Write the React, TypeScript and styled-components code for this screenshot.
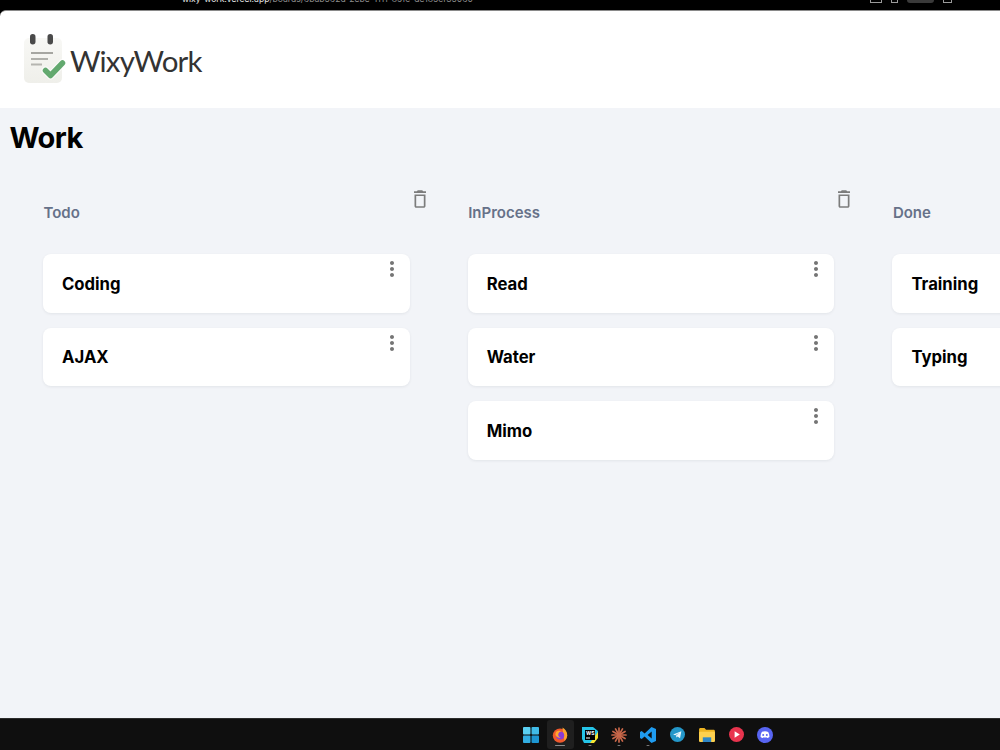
import React from 'react';
import styled, { createGlobalStyle } from 'styled-components';

const GlobalStyle = createGlobalStyle`
  html, body {
    margin: 0;
    padding: 0;
    height: 100%;
    overflow: hidden;
    background: #000;
    font-family: Inter, "Liberation Sans", sans-serif;
  }
`;

const boards = [
  { title: 'Todo', cards: ['Coding', 'AJAX'] },
  { title: 'InProcess', cards: ['Read', 'Water', 'Mimo'] },
  { title: 'Done', cards: ['Training', 'Typing'] },
];

const TrashIcon = () => (
  <svg width="24" height="24" viewBox="0 0 24 24" fill="#7c7c7c">
    <path d="M6.500 19c0 1 .8 1.800 1.800 1.800h7.400c1 0 1.800-.8 1.800-1.800V7.500h-11V19zM8.200 9h7.600v10.200H8.200V9zm7-4.800l-1-1h-4.400l-1 1H6v1.700h12V4.200z" />
  </svg>
);

const DotsIcon = () => (
  <svg width="24" height="24" viewBox="0 0 24 24" fill="#757575">
    <path d="M12 8c1.100 0 2-.9 2-2s-.9-2-2-2-2 .9-2 2 .9 2 2 2zm0 2c-1.100 0-2 .9-2 2s.9 2 2 2 2-.9 2-2-.9-2-2-2zm0 6c-1.100 0-2 .9-2 2s.9 2 2 2 2-.9 2-2-.9-2-2-2z" />
  </svg>
);

const LogoIcon = () => (
  <svg width="46" height="50" viewBox="0 0 46 50">
    <defs>
      <linearGradient id="note" x1="0" y1="0" x2="0" y2="1">
        <stop offset="0" stopColor="#f8f8f5" />
        <stop offset="1" stopColor="#efefea" />
      </linearGradient>
    </defs>
    <rect x="1" y="4" width="38" height="45" rx="5" fill="url(#note)" />
    <rect x="7" y="0" width="5.500" height="10.500" rx="2.700" fill="#4a4a4a" />
    <rect x="24.500" y="0" width="5.500" height="10.500" rx="2.700" fill="#4a4a4a" />
    <rect x="8" y="18" width="22" height="2" fill="#a6a6a1" />
    <rect x="8" y="24" width="17" height="2" fill="#b0b0ab" />
    <rect x="8" y="29.500" width="11" height="2" fill="#b5b5b0" />
    <path d="M22.500 36.500l5 5L39.500 29" fill="none" stroke="#fff" strokeWidth="8" strokeLinecap="round" strokeLinejoin="round" opacity="0.7" />
    <path d="M22.500 36.500l5 5L39.500 29" fill="none" stroke="#63a96f" strokeWidth="5.500" strokeLinecap="round" strokeLinejoin="round" />
  </svg>
);

const WindowsIcon = () => (
  <svg width="16" height="16" viewBox="0 0 18 18">
    <rect x="0" y="0" width="8.400" height="8.400" rx="1" fill="#5ad0f2" />
    <rect x="9.600" y="0" width="8.400" height="8.400" rx="1" fill="#40bbe8" />
    <rect x="0" y="9.600" width="8.400" height="8.400" rx="1" fill="#32aee2" />
    <rect x="9.600" y="9.600" width="8.400" height="8.400" rx="1" fill="#1d96d2" />
  </svg>
);

const FirefoxIcon = () => (
  <svg width="16" height="16" viewBox="0 0 16 16">
    <circle cx="8" cy="8.600" r="7.200" fill="#f0582c" />
    <path d="M10.500.6c3 1.800 5 4.600 4.700 8.200-.3 2.400-1.400 3.800-2.700 4.900L11 5.400z" fill="#fba32d" />
    <circle cx="8.200" cy="8.400" r="4" fill="#8a3bd6" />
    <path d="M3.800 5.200C5.400 3.600 8 3.400 9.800 4.300 8.200 4.600 6.800 5.400 6.400 6.800c-.6 1.800.4 3.500 2.300 3.800-2.200.8-5-1-5.300-3z" fill="#ffa72f" />
  </svg>
);

const WebStormIcon = () => (
  <svg width="16" height="16" viewBox="0 0 16 16">
    <path d="M0 0h11L16 4v6l-5 6H2L0 12z" fill="#25c4e8" />
    <path d="M8 16h4l4-5V5z" fill="#f7e531" />
    <rect x="3" y="3" width="10" height="10" fill="#000" />
    <text x="4" y="8.400" fontSize="5" fontWeight="700" fill="#fff" fontFamily="Inter, sans-serif">WS</text>
    <rect x="4" y="10.500" width="4" height="1" fill="#fff" />
  </svg>
);

const BurstIcon = () => (
  <svg width="16" height="16" viewBox="0 0 16 16" stroke="#c8674a" strokeWidth="1.700" strokeLinecap="round">
    {Array.from({ length: 12 }).map((_, i) => {
      const a = (i * Math.PI) / 6;
      return <line key={i} x1={8} y1={8} x2={8 + Math.cos(a) * 7} y2={8 + Math.sin(a) * 7} />;
    })}
  </svg>
);

const VSCodeIcon = () => (
  <svg width="16" height="16" viewBox="0 0 16 16">
    <path d="M11.500 0L16 2v12l-4.500 2L4.600 9.600 1.700 11.900 0 11V5l1.700-.9 2.900 2.300zM11.700 4.500L7.600 8l4.100 3.500z" fill="#1f9cf0" fillRule="evenodd" />
  </svg>
);

const TelegramIcon = () => (
  <svg width="15" height="15" viewBox="0 0 16 16">
    <circle cx="8" cy="8" r="8" fill="#2497c9" />
    <path d="M3.300 8l8.800-3.500-1.400 7.400-2.600-1.900-1.300 1.300-.3-2.200 3.600-3.100-4.500 2.700z" fill="#e9f5fb" />
  </svg>
);

const FolderIcon = () => (
  <svg width="16" height="14" viewBox="0 0 17 15">
    <path d="M0 1.500C0 .7.7 0 1.500 0h4.300l1.700 1.800h8c.8 0 1.500.7 1.500 1.500V14H0z" fill="#eeb422" />
    <rect x="0" y="4" width="17" height="11" rx="1" fill="#fdd04f" />
    <rect x="4" y="10" width="9" height="5" fill="#2f87c6" />
  </svg>
);

const PlayIcon = () => (
  <svg width="15" height="15" viewBox="0 0 16 16">
    <circle cx="8" cy="8" r="8" fill="#e8344e" />
    <path d="M6 4.500l5.500 3.500L6 11.500z" fill="#fff" />
  </svg>
);

const DiscordIcon = () => (
  <svg width="16" height="16" viewBox="0 0 16 16">
    <circle cx="8" cy="8" r="8" fill="#5865f2" />
    <path d="M4.800 4.900c1.900-.8 4.500-.8 6.400 0 .9 1.500 1.300 3.200 1.200 5-.8.600-1.600 1-2.400 1.200l-.5-.9c-1 .3-2 .3-3 0l-.5.900c-.8-.2-1.600-.6-2.400-1.200-.1-1.800.3-3.500 1.200-5z" fill="#fff" />
    <circle cx="6.200" cy="8" r="1" fill="#5865f2" />
    <circle cx="9.800" cy="8" r="1" fill="#5865f2" />
  </svg>
);

const apps = [
  { id: 'start', icon: <WindowsIcon /> },
  { id: 'firefox', icon: <FirefoxIcon />, active: true },
  { id: 'webstorm', icon: <WebStormIcon />, open: true },
  { id: 'burst', icon: <BurstIcon />, open: true },
  { id: 'vscode', icon: <VSCodeIcon />, open: true },
  { id: 'telegram', icon: <TelegramIcon /> },
  { id: 'folder', icon: <FolderIcon /> },
  { id: 'play', icon: <PlayIcon /> },
  { id: 'discord', icon: <DiscordIcon /> },
];

export default function App() {
  return (
    <Page>
      <GlobalStyle />
      <BrowserStrip>
        <Url>
          <b>wixy-work.vercel.app</b>/boards/6bab562d-2ebe-1111-89fc-de185cf35060
        </Url>
        <StripTools>
          <StripOutline $width={10} />
          <StripOutline $width={5} />
          <StripPill />
          <StripOutline $width={7} />
        </StripTools>
      </BrowserStrip>
      <Header>
        <Logo>
          <LogoIcon />
          <LogoText>WixyWork</LogoText>
        </Logo>
      </Header>
      <Main>
        <PageTitle>Work</PageTitle>
        <Board>
          {boards.map((column) => (
            <Column key={column.title}>
              <ColumnHead>
                <ColumnTitle>{column.title}</ColumnTitle>
                <TrashIcon />
              </ColumnHead>
              <CardList>
                {column.cards.map((card) => (
                  <Card key={card}>
                    <CardTitle>{card}</CardTitle>
                    <CardMenu>
                      <DotsIcon />
                    </CardMenu>
                  </Card>
                ))}
              </CardList>
            </Column>
          ))}
        </Board>
      </Main>
      <Taskbar>
        {apps.map((app) => (
          <TaskItem key={app.id} $active={app.active} $open={app.open}>
            {app.icon}
          </TaskItem>
        ))}
      </Taskbar>
    </Page>
  );
}

const Page = styled.div`
  width: 1000px;
  height: 750px;
  display: flex;
  flex-direction: column;
  overflow: hidden;
  background: #000;
`;

const BrowserStrip = styled.div`
  height: 10px;
  flex: none;
  display: flex;
  justify-content: space-between;
  overflow: hidden;
  padding: 0 48px 0 182px;
`;

const Url = styled.div`
  margin-top: -8px;
  font-size: 8.600px;
  line-height: 14px;
  white-space: nowrap;
  color: #8f8f8f;

  b {
    font-weight: 400;
    color: #e8e8e8;
  }
`;

const StripTools = styled.div`
  display: flex;
  align-items: flex-start;
  gap: 9px;
`;

const StripOutline = styled.div<{ $width: number }>`
  width: ${(p) => p.$width}px;
  height: 2px;
  border: 1px solid #9a9a9a;
  border-top: none;
`;

const StripPill = styled.div`
  width: 27px;
  height: 3px;
  border-radius: 0 0 5px 5px;
  background: #3a3a3a;
`;

const Header = styled.header`
  height: 97px;
  flex: none;
  display: flex;
  align-items: center;
  padding-left: 23px;
  background: #fff;
  border-top: 1px solid #8a8a8a;
  border-top-left-radius: 6px;
`;

const Logo = styled.div`
  display: flex;
  align-items: flex-end;
  margin-top: -2px;
`;

const LogoText = styled.span`
  margin-left: 1px;
  margin-bottom: 4px;
  font-family: Lato, "Open Sans", sans-serif;
  font-size: 29.500px;
  line-height: 38px;
  letter-spacing: -0.85px;
  color: #333;
`;

const Main = styled.main`
  flex: 1;
  min-height: 0;
  overflow: hidden;
  background: #f2f4f8;
`;

const PageTitle = styled.h1`
  margin: 12px 0 0 9.500px;
  font-size: 29px;
  line-height: 36px;
  font-weight: 700;
  letter-spacing: -0.6px;
  color: #000;
`;

const Board = styled.div`
  display: flex;
  gap: 58.200px;
  margin-top: 31px;
  padding-left: 43px;
`;

const Column = styled.section`
  width: 366.500px;
  flex: none;
`;

const ColumnHead = styled.div`
  height: 67px;
  margin-right: -22px;
  display: flex;
  justify-content: space-between;
  align-items: flex-start;
`;

const ColumnTitle = styled.h2`
  margin: 16.500px 0 0 0.500px;
  font-size: 15px;
  line-height: 18px;
  font-weight: 600;
  color: #667189;
`;

const CardList = styled.div`
  display: flex;
  flex-direction: column;
  gap: 15px;
`;

const Card = styled.article`
  height: 58.500px;
  display: flex;
  justify-content: space-between;
  align-items: center;
  padding: 0 6px 0 19px;
  background: #fff;
  border-radius: 8px;
  box-shadow: 0 1px 3px rgba(16, 24, 40, 0.07);
`;

const CardTitle = styled.h3`
  margin: 1px 0 0;
  font-size: 16.700px;
  line-height: 22px;
  font-weight: 700;
  color: #000;
`;

const CardMenu = styled.div`
  align-self: flex-start;
  height: 24px;
  margin-top: 3px;
`;

const Taskbar = styled.footer`
  height: 31px;
  flex: none;
  display: flex;
  align-items: center;
  gap: 2.300px;
  padding-left: 517.500px;
  background: #0f0f0f;
  border-top: 1px solid #2c2c2c;
`;

const TaskItem = styled.div<{ $active?: boolean; $open?: boolean }>`
  position: relative;
  width: 27px;
  height: 29px;
  display: flex;
  align-items: center;
  justify-content: center;
  border-radius: 3px;
  background: ${(p) => (p.$active ? '#1f1f1f' : 'transparent')};

  &::after {
    content: '';
    position: absolute;
    bottom: 3px;
    left: 50%;
    width: ${(p) => (p.$active ? '10px' : '3px')};
    height: 1.500px;
    transform: translateX(-50%);
    border-radius: 1px;
    background: ${(p) => (p.$active ? '#8a8a8a' : p.$open ? '#777' : 'transparent')};
  }
`;
